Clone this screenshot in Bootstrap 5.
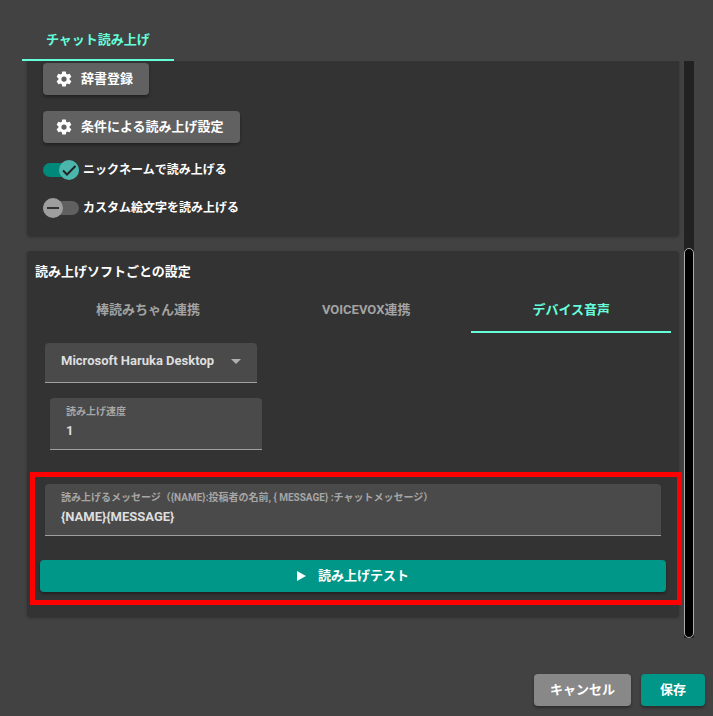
<!DOCTYPE html>
<html lang="ja" data-bs-theme="dark">
<head>
<meta charset="utf-8">
<meta name="viewport" content="width=device-width, initial-scale=1">
<title>チャット読み上げ</title>
<link href="https://cdn.jsdelivr.net/npm/bootstrap@5.3.0/dist/css/bootstrap.min.css" rel="stylesheet">
<style>
  body { background: #424242; color: #fff; font: 700 13px/20px Roboto, "Noto Sans CJK JP", sans-serif; }
  .dialog-shell { min-height: 100vh; }
  .main-tabs { padding: 18px 22px 0; }
  .tab-link { color: #a3a3a3; height: 48px; padding: 4px 24px 0; border: 0; border-radius: 0; border-bottom: 2px solid transparent; font-weight: 700; background: none; }
  .main-tabs .tab-link { height: 43px; padding-top: 2px; }
  .tab-link:hover { color: #ccc; }
  .tab-link.active, .tab-link.active:hover { color: #64ffda; border-bottom-color: #64ffda; }
  .scroll-zone { margin: 0 19px 0 27px; gap: 5px; }
  .panels { gap: 15px; padding-bottom: 20px; min-width: 0; }
  .panel { background: #333; border-radius: 4px; box-shadow: 0 1px 3px rgba(0,0,0,.3); }
  .panel-top { border-radius: 0 0 4px 4px; padding: 2px 16px 18px; clip-path: inset(0 -4px -4px -4px); }
  .panel-soft { padding: 8px 8px 25px; }
  .panel-title { font-size: 13px; font-weight: 700; line-height: 26px; margin: 0; }
  .btn-flat { --bs-btn-color: #fff; --bs-btn-hover-color: #fff; --bs-btn-border-width: 0; --bs-btn-font-size: 13px; --bs-btn-font-weight: 700; --bs-btn-line-height: 20px; --bs-btn-padding-x: 16px; --bs-btn-padding-y: 0; --bs-btn-border-radius: 4px; height: 32px; box-shadow: 0 2px 3px rgba(0,0,0,.35); }
  .btn-gray { --bs-btn-bg: #616161; --bs-btn-hover-bg: #707070; padding-left: 12px; }
  .btn-cancel { --bs-btn-bg: #888; --bs-btn-hover-bg: #999; }
  .btn-teal { --bs-btn-bg: #009688; --bs-btn-hover-bg: #00a898; }
  .btn-save { min-width: 64px; }
  .gear { width: 18px; height: 18px; margin-right: 8px; }
  .switches { gap: 18px; margin-top: 17px; }
  .switch-row { font-size: 12px; height: 20px; gap: 4px; }
  .switch-row .toggle { width: 36px; height: 20px; margin: 0; border: 0; appearance: none; flex: none;
    background: url("data:image/svg+xml,%3Csvg xmlns='http://www.w3.org/2000/svg' viewBox='0 0 36 20'%3E%3Crect y='3' width='36' height='14' rx='7' fill='%23606060'/%3E%3Ccircle cx='10' cy='10' r='10' fill='%239e9e9e'/%3E%3Cpath d='M4 10h12' stroke='%23333' stroke-width='2'/%3E%3C/svg%3E"); }
  .switch-row .toggle:checked { background-image: url("data:image/svg+xml,%3Csvg xmlns='http://www.w3.org/2000/svg' viewBox='0 0 36 20'%3E%3Crect y='3' width='36' height='14' rx='7' fill='%2300897b'/%3E%3Ccircle cx='26' cy='10' r='10' fill='%234db6ac'/%3E%3Cpath d='M20 10.5l4 4 8.500-8.500' fill='none' stroke='%23222' stroke-width='2'/%3E%3C/svg%3E"); }
  .field-box { background: #4a4a4a; border-bottom: 1px solid #a0a0a0; border-radius: 4px 4px 0 0; padding: 0 16px; }
  .field-box label { display: block; color: #a6a6a6; font-size: 10px; line-height: 14px; padding-top: 7px; }
  .field-box input, .voice-select { background: none; border: 0; padding: 0; color: #dedede; font-weight: 700; width: 100%; outline-offset: 4px; }
  .field-box input { display: block; height: 22px; }
  .tall-field { height: 52px; }
  .voice-box, .speed-box { width: 212px; }
  .voice-box { height: 40px; margin: 10px 10px 0; padding: 0; }
  .voice-select { height: 36px; padding: 0 40px 0 16px; appearance: none; background: url("data:image/svg+xml,%3Csvg xmlns='http://www.w3.org/2000/svg' viewBox='0 0 10 5'%3E%3Cpath d='M0 0h10L5 5z' fill='%23b0b0b0'/%3E%3C/svg%3E") right 16px center / 10px 5px no-repeat; }
  .voice-select option { background: #4a4a4a; }
  .speed-box { margin: 15px 15px 0; }
  .message-group { margin-top: 34px; padding: 0 5px; gap: 24px; }
  .message-group .field-box { margin: 0 5px; }
  .highlight { position: absolute; inset: -12px -11px -13px -5px; border: 5px solid #f00; pointer-events: none; z-index: 2; }
  .play { width: 9px; height: 10px; margin-right: 12px; }
  .scroll-track { width: 10px; background: #222; flex: none; }
  .scroll-thumb { height: 390px; background: #000; border: 1px solid #aaa; border-radius: 5px; }
  .footer-bar { gap: 10px; padding: 36px 8px 10px; }
</style>
</head>
<body>
<main class="dialog-shell d-flex flex-column">
  <nav class="main-tabs nav" role="tablist">
    <button class="tab-link nav-link active" type="button" role="tab" aria-selected="true">チャット読み上げ</button>
  </nav>
  <div class="scroll-zone d-flex flex-grow-1">
    <div class="panels d-flex flex-column flex-grow-1">
      <section class="panel panel-top d-flex flex-column align-items-start">
        <button class="btn btn-flat btn-gray d-flex align-items-center mb-3" type="button">
          <svg class="gear" viewBox="0 0 24 24" fill="#fff" aria-hidden="true"><path d="M12 15.500A3.500 3.500 0 0 1 8.500 12 3.500 3.500 0 0 1 12 8.500a3.500 3.500 0 0 1 3.500 3.500 3.500 3.500 0 0 1-3.500 3.500m7.430-2.530c.04-.32.07-.64.07-.97s-.03-.66-.07-1l2.110-1.630c.19-.15.24-.42.12-.64l-2-3.460c-.12-.22-.39-.31-.61-.22l-2.490 1c-.52-.39-1.060-.73-1.690-.98l-.37-2.650A.506.506 0 0 0 14 2h-4c-.25 0-.46.18-.5.420l-.37 2.650c-.63.25-1.170.59-1.690.98l-2.490-1c-.22-.09-.49 0-.61.220l-2 3.460c-.13.22-.07.49.12.640L4.570 11c-.04.34-.07.67-.07 1s.03.650.07.970l-2.110 1.660c-.19.15-.25.42-.12.640l2 3.460c.12.22.39.3.61.220l2.490-1.010c.52.4 1.060.74 1.690.99l.37 2.650c.04.24.25.420.5.420h4c.25 0 .46-.18.5-.42l.37-2.650c.63-.26 1.170-.59 1.690-.99l2.490 1.010c.22.080.49 0 .61-.22l2-3.460c.12-.22.070-.49-.12-.64z"/></svg>辞書登録
        </button>
        <button class="btn btn-flat btn-gray d-flex align-items-center" type="button">
          <svg class="gear" viewBox="0 0 24 24" fill="#fff" aria-hidden="true"><path d="M12 15.500A3.500 3.500 0 0 1 8.500 12 3.500 3.500 0 0 1 12 8.500a3.500 3.500 0 0 1 3.500 3.500 3.500 3.500 0 0 1-3.500 3.500m7.430-2.530c.04-.32.07-.64.07-.97s-.03-.66-.07-1l2.110-1.630c.19-.15.24-.42.12-.64l-2-3.460c-.12-.22-.39-.31-.61-.22l-2.490 1c-.52-.39-1.060-.73-1.690-.98l-.37-2.650A.506.506 0 0 0 14 2h-4c-.25 0-.46.18-.5.420l-.37 2.650c-.63.25-1.170.59-1.690.98l-2.490-1c-.22-.09-.49 0-.61.220l-2 3.460c-.13.22-.07.49.12.640L4.570 11c-.04.34-.07.67-.07 1s.03.650.07.970l-2.110 1.660c-.19.15-.25.42-.12.640l2 3.460c.12.22.39.3.61.220l2.490-1.010c.52.4 1.060.74 1.690.99l.37 2.650c.04.24.25.420.5.420h4c.25 0 .46-.18.5-.42l.37-2.650c.63-.26 1.170-.59 1.690-.99l2.490 1.010c.22.080.49 0 .61-.22l2-3.460c.12-.22.070-.49-.12-.64z"/></svg>条件による読み上げ設定
        </button>
        <div class="switches d-flex flex-column">
          <div class="switch-row d-flex align-items-center">
            <input class="toggle" type="checkbox" role="switch" id="nick" checked><label for="nick">ニックネームで読み上げる</label>
          </div>
          <div class="switch-row d-flex align-items-center">
            <input class="toggle" type="checkbox" role="switch" id="emoji"><label for="emoji">カスタム絵文字を読み上げる</label>
          </div>
        </div>
      </section>
      <section class="panel panel-soft">
        <h2 class="panel-title">読み上げソフトごとの設定</h2>
        <div class="nav nav-fill flex-nowrap" role="tablist">
          <button class="tab-link nav-link nav-item" type="button" role="tab" aria-selected="false">棒読みちゃん連携</button>
          <button class="tab-link nav-link nav-item" type="button" role="tab" aria-selected="false">VOICEVOX連携</button>
          <button class="tab-link nav-link nav-item active" type="button" role="tab" aria-selected="true">デバイス音声</button>
        </div>
        <div class="field-box voice-box">
          <select class="voice-select" aria-label="音声"><option>Microsoft Haruka Desktop</option></select>
        </div>
        <div class="field-box tall-field speed-box">
          <label for="speed">読み上げ速度</label>
          <input id="speed" type="text" inputmode="decimal" value="1">
        </div>
        <div class="message-group position-relative d-flex flex-column">
          <div class="field-box tall-field">
            <label for="msg">読み上げるメッセージ（{NAME}:投稿者の名前, { MESSAGE} :チャットメッセージ）</label>
            <input id="msg" type="text" value="{NAME}{MESSAGE}">
          </div>
          <button class="btn btn-flat btn-teal d-flex align-items-center justify-content-center" type="button">
            <svg class="play" viewBox="0 0 9 10" fill="#fff" aria-hidden="true"><path d="M0 0l9 5-9 5z"/></svg>読み上げテスト
          </button>
          <div class="highlight"></div>
        </div>
      </section>
    </div>
    <div class="scroll-track d-flex flex-column justify-content-end" aria-hidden="true"><div class="scroll-thumb"></div></div>
  </div>
  <footer class="footer-bar d-flex justify-content-end">
    <button class="btn btn-flat btn-cancel" type="button">キャンセル</button>
    <button class="btn btn-flat btn-teal btn-save" type="button">保存</button>
  </footer>
</main>
<script src="https://cdn.jsdelivr.net/npm/bootstrap@5.3.0/dist/js/bootstrap.bundle.min.js"></script>
</body>
</html>
